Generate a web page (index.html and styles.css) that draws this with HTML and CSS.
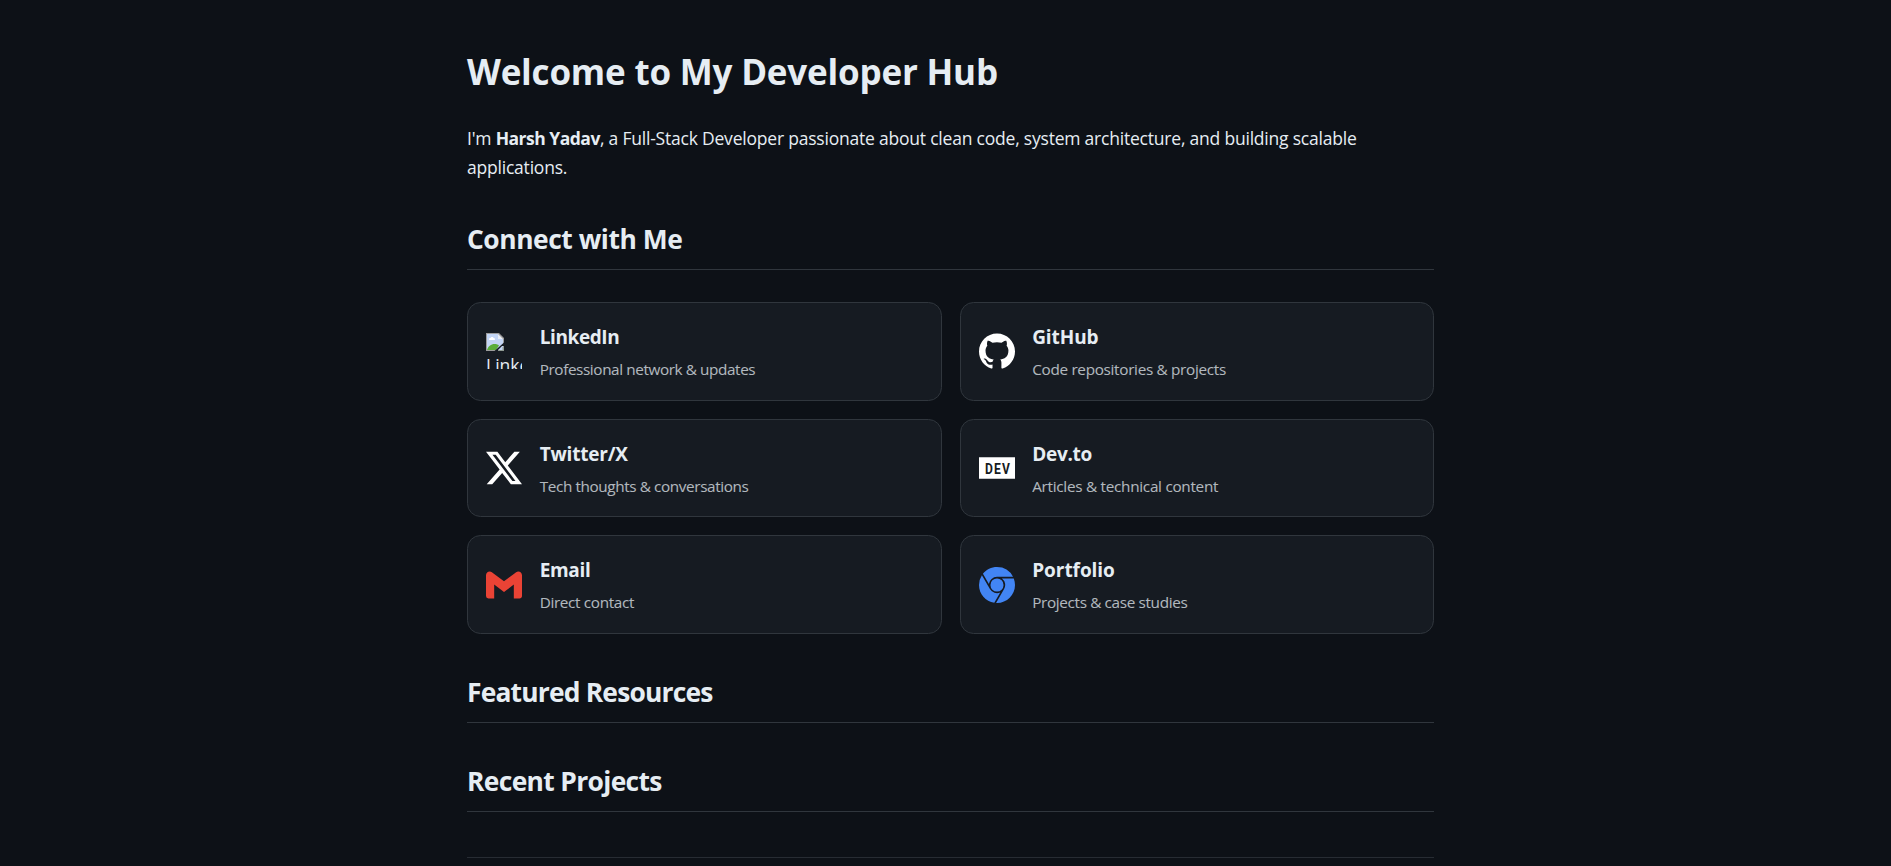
FILE: index.html
```html
<!DOCTYPE html>
<html lang="en">
<head>
<meta charset="utf-8">
<title>Developer Hub</title>
<link rel="stylesheet" href="styles.css">
</head>
<body>
<main class="page">
  <h1 class="title">Welcome to My Developer Hub</h1>
  <p class="intro">I'm <strong class="author">Harsh Yadav</strong>, a Full-Stack Developer passionate about clean code, system architecture, and building scalable applications.</p>

  <h2 class="heading">Connect with Me</h2>
  <div class="cards">
    <a class="card">
      <span class="icon missing">
        <svg class="missing-glyph" viewBox="0 0 18 18">
          <path fill="#9c9c9c" d="M0 0h13l5 5v13H0z"/>
          <path fill="#c3d5f5" d="M1 1h11v5h5v11H1z"/>
          <path fill="#fff" d="M3 6.200c0-1 1-1.200 1.500-1.200.4-1.500 2.800-1.500 3.200 0C9 5 9.500 6.500 8.500 7H3.500C3.200 7 3 6.600 3 6.200z"/>
          <path fill="#5aad3a" d="M1 17c1-3.500 4-6 7.500-6 2 0 3.500.5 4.500 1.500L10 17z"/>
          <path fill="#e9eef6" d="M12 1l5 5h-5z"/>
          <path fill="#161b22" d="M18 9.500v3.500h-2l-4 4v1H8.500z"/>
          <path fill="#8f9a92" d="M18 13.500V18h-6v-1h4.500v-3z"/>
        </svg>
        <span class="missing-text">LinkedIn</span>
      </span>
      <span class="info"><strong class="name n-linkedin">LinkedIn</strong><span class="desc d-linkedin">Professional network &amp; updates</span></span>
    </a>
    <a class="card">
      <svg class="icon" viewBox="0 0 24 24" fill="#fff"><path d="M12 .297c-6.63 0-12 5.373-12 12 0 5.303 3.438 9.8 8.205 11.385.6.113.82-.258.82-.577 0-.285-.01-1.04-.015-2.04-3.338.724-4.042-1.61-4.042-1.61C4.422 18.07 3.633 17.7 3.633 17.7c-1.087-.744.084-.729.084-.729 1.205.084 1.838 1.236 1.838 1.236 1.07 1.835 2.809 1.305 3.495.998.108-.776.417-1.305.76-1.605-2.665-.3-5.466-1.332-5.466-5.93 0-1.31.465-2.38 1.235-3.22-.135-.303-.54-1.523.105-3.176 0 0 1.005-.322 3.3 1.23.96-.267 1.98-.399 3-.405 1.02.006 2.04.138 3 .405 2.28-1.552 3.285-1.23 3.285-1.23.645 1.653.24 2.873.12 3.176.765.84 1.23 1.91 1.23 3.22 0 4.61-2.805 5.625-5.475 5.92.42.36.81 1.096.81 2.22 0 1.606-.015 2.896-.015 3.286 0 .315.21.69.825.57C20.565 22.092 24 17.592 24 12.297c0-6.627-5.373-12-12-12"/></svg>
      <span class="info"><strong class="name n-github">GitHub</strong><span class="desc d-github">Code repositories &amp; projects</span></span>
    </a>
    <a class="card">
      <svg class="icon" viewBox="0 0 24 24" fill="#fff"><path d="M18.901 1.153h3.68l-8.04 9.19L24 22.846h-7.406l-5.8-7.584-6.638 7.584H.474l8.6-9.83L0 1.154h7.594l5.243 6.932ZM17.61 20.644h2.039L6.486 3.24H4.298Z"/></svg>
      <span class="info"><strong class="name n-twitter">Twitter/X</strong><span class="desc d-twitter">Tech thoughts &amp; conversations</span></span>
    </a>
    <a class="card">
      <svg class="icon" viewBox="0 0 36 36"><path fill="#fff" d="M0 7.200h36v21.600H0z"/><text class="dev-text" x="6" y="23.700" textLength="26" lengthAdjust="spacingAndGlyphs">DEV</text></svg>
      <span class="info"><strong class="name n-dev">Dev.to</strong><span class="desc d-dev">Articles &amp; technical content</span></span>
    </a>
    <a class="card">
      <svg class="icon" viewBox="0 0 24 24" fill="#ea4335"><path d="M24 5.457v13.909c0 .904-.732 1.636-1.636 1.636h-3.819V11.73L12 16.64l-6.545-4.91v9.273H1.636A1.636 1.636 0 0 1 0 19.366V5.457c0-2.023 2.309-3.178 3.927-1.964L5.455 4.64 12 9.548l6.545-4.91 1.528-1.145C21.69 2.28 24 3.434 24 5.457z"/></svg>
      <span class="info"><strong class="name n-email">Email</strong><span class="desc d-email">Direct contact</span></span>
    </a>
    <a class="card">
      <svg class="icon" viewBox="0 0 24 24" fill="#4285f4"><path d="M12 0C8.21 0 4.831 1.757 2.632 4.501l3.953 6.848A5.454 5.454 0 0 1 12 6.545h10.691A12 12 0 0 0 12 0zM1.931 5.47A11.943 11.943 0 0 0 0 12c0 6.012 4.42 10.991 10.189 11.864l3.953-6.847a5.45 5.45 0 0 1-6.865-2.29zm13.342 2.166a5.446 5.446 0 0 1 1.45 7.09l.002.001h-.002l-5.344 9.257c.206.01.413.016.621.016 6.627 0 12-5.373 12-12 0-1.54-.29-3.011-.818-4.364zM12 16.364a4.364 4.364 0 1 1 0-8.728 4.364 4.364 0 0 1 0 8.728Z"/></svg>
      <span class="info"><strong class="name n-portfolio">Portfolio</strong><span class="desc d-portfolio">Projects &amp; case studies</span></span>
    </a>
  </div>

  <h2 class="heading featured">Featured Resources</h2>
  <h2 class="heading recent">Recent Projects</h2>
  <hr class="footer-line">
</main>
</body>
</html>
```
FILE: styles.css
```css
* { box-sizing: border-box; }
html { background: #0d1117; overflow: hidden; }
body {
  margin: 0;
  height: 866px;
  overflow: hidden;
  background: #0d1117;
  color: #e6edf3;
  font-family: "Open Sans", "Noto Sans", sans-serif;
  font-size: 17.5px;
  line-height: 28.8px;
}
.page { width: 967px; margin-left: 467px; padding-top: 42.6px; }
.title { margin: 0 0 23.6px; font-size: 35px; line-height: 57.6px; letter-spacing: -0.2px; }
.intro { margin: 0 0 36px; letter-spacing: -0.21px; }
.author { letter-spacing: -0.5px; }
.heading {
  margin: 36.2px 0 0;
  padding: 0.6px 0 7.8px;
  border-bottom: 1px solid #30363d;
  font-size: 26.4px;
  line-height: 43.2px;
  letter-spacing: -0.45px;
}
.featured { letter-spacing: -0.8px; }
.recent { letter-spacing: -0.65px; }
.cards {
  display: grid;
  grid-template-columns: 1fr 1fr;
  gap: 18px;
  margin-top: 32px;
}
.card {
  display: flex;
  align-items: center;
  gap: 18px;
  padding: 18px;
  border: 1px solid #30363d;
  border-radius: 13.5px;
  background: #161b22;
}
.icon { display: block; flex: none; width: 36px; height: 36px; }
.info { display: flex; flex-direction: column; gap: 3.3px; padding: 0.9px 0 0.3px; margin-left: -0.3px; white-space: nowrap; }
.name { font-size: 19px; line-height: 31.68px; }
.desc { font-size: 15.3px; line-height: 24.48px; opacity: 0.75; }
.n-linkedin { letter-spacing: -0.4px; }
.n-github { letter-spacing: -0.1px; }
.n-twitter { letter-spacing: -0.2px; }
.n-dev { letter-spacing: -0.3px; }
.n-email { letter-spacing: -0.35px; }
.n-portfolio { letter-spacing: -0.05px; }
.d-linkedin { letter-spacing: -0.4px; }
.d-github { letter-spacing: -0.31px; }
.d-twitter { letter-spacing: -0.39px; }
.d-dev { letter-spacing: -0.28px; }
.d-email { letter-spacing: -0.35px; }
.d-portfolio { letter-spacing: -0.35px; }
.missing { overflow: hidden; }
.missing-glyph { display: block; width: 18px; height: 18px; }
.missing-text { display: block; white-space: nowrap; }
.dev-text { font-family: Roboto, sans-serif; font-size: 15.5px; font-weight: 700; letter-spacing: 1.5px; fill: #161b22; }
.footer-line { margin: 45px 0 0; border: 0; border-top: 1px solid #272c33; }
```
